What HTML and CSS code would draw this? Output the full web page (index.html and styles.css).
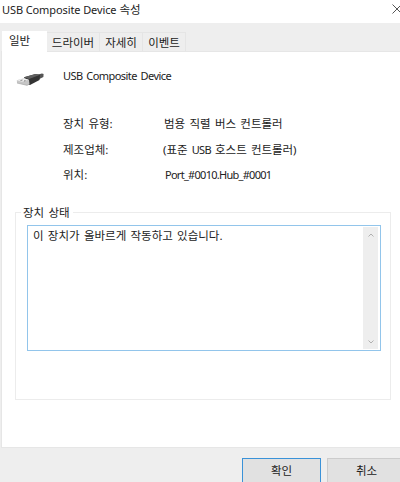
FILE: index.html
```html
<!DOCTYPE html>
<html lang="ko">
<head>
<meta charset="utf-8">
<title>USB Composite Device 속성</title>
<link rel="stylesheet" href="styles.css">
</head>
<body>
<div class="dialog">
  <header class="titlebar">
    <h1 class="title"><span class="title-name">USB Composite Device</span> 속성</h1>
    <svg class="close" width="8" height="10" viewBox="0 0 8 10"><path d="M.5.5l9 9M.5 9.500l9-9"/></svg>
  </header>
  <nav class="tabs">
    <span class="tab active">일반</span>
    <span class="tab driver">드라이버</span>
    <span class="tab details">자세히</span>
    <span class="tab events">이벤트</span>
  </nav>
  <main class="panel">
    <div class="device">
      <svg class="usb" width="28" height="14" viewBox="0 0 28 14">
        <path d="M20 2l6-1.600 1.600.5-.2 3.200-6 3z" fill="#555"/>
        <path d="M8 4.300L19.500 1l4.500 1-.5 5L14 12l-4-1z" fill="#333"/>
        <path d="M8 4.300L19.500 1l4 1-10.500 4z" fill="#606060"/>
        <path d="M.8 7.300L8 5.200l5 1.500.5 4.500-2.500 1.300L1 10z" fill="#c6c6c6"/>
        <path d="M.8 7.300L8 5.200l4.500 1.500-6.500 2z" fill="#ededed"/>
        <path d="M1 10l10 2.300 2-1" fill="none" stroke="#aaa" stroke-width=".7"/>
        <path d="M4.500 7.500l2-.5M8 8l1.500-.4" stroke="#888" stroke-width="1"/>
      </svg>
      <span class="device-name">USB Composite Device</span>
    </div>
    <dl class="props">
      <dt>장치 유형:</dt><dd class="type">범용 직렬 버스 컨트롤러</dd>
      <dt>제조업체:</dt><dd class="maker">(표준 <span class="latin">USB</span> 호스트 컨트롤러)</dd>
      <dt>위치:</dt><dd class="port">Port_#0010.Hub_#0001</dd>
    </dl>
    <section class="group">
      <h2 class="legend">장치 상태</h2>
      <div class="status">
        <p class="message">이 장치가 올바르게 작동하고 있습니다.</p>
        <div class="scrollbar">
          <svg width="6" height="4" viewBox="0 0 6 4"><path d="M.5 3.500L3 1l2.500 2.500"/></svg>
          <svg width="6" height="4" viewBox="0 0 6 4"><path d="M.5.5L3 3 5.500.5"/></svg>
        </div>
      </div>
    </section>
  </main>
  <footer class="actions">
    <button class="button primary">확인</button>
    <button class="button">취소</button>
  </footer>
</div>
</body>
</html>
```
FILE: styles.css
```css
* { box-sizing: border-box; }
body {
  margin: 0;
  overflow: hidden;
  font: 11.5px/16px "Noto Sans", "Noto Sans CJK KR", sans-serif;
  word-spacing: 1.3px;
  color: #222;
}
h1, h2, p, dl, dd { margin: 0; font-size: 11.5px; font-weight: 400; }
.dialog {
  width: 400px;
  height: 482px;
  display: flex;
  flex-direction: column;
  background: #eee;
  overflow: hidden;
}
.titlebar {
  height: 23px;
  flex: none;
  display: flex;
  justify-content: space-between;
  background: #fff;
  padding: 2px 0 0 2px;
}
.title { white-space: nowrap; word-spacing: 0; }
.title-name { font-size: 11px; letter-spacing: -.1px; }
.close { margin-top: 2px; fill: none; stroke: #555; stroke-width: 1; }
.tabs {
  position: relative;
  height: 28px;
  flex: none;
  display: flex;
  align-items: flex-end;
  padding-left: 2px;
}
.tab {
  height: 19px;
  border: 1px solid #e5e5e5;
  border-width: 1px 1px 0 0;
  text-align: center;
  line-height: 19px;
  white-space: nowrap;
}
.tab.active {
  width: 45px;
  height: 21px;
  margin-bottom: -1px;
  padding-left: 7px;
  background: #fff;
  border: 0;
  text-align: left;
  line-height: 19px;
}
.driver { width: 53px; }
.details { width: 43px; }
.events { width: 43px; }
.panel {
  height: 397px;
  flex: none;
  margin-left: 1px;
  background: #fff;
  border: 1px solid #e6e6e6;
  border-right: 0;
  padding: 0 9px 0 13px;
}
.device { display: flex; height: 58px; padding-top: 16px; }
.usb { margin: 5px 0 0 1px; flex: none; }
.device-name {
  margin-left: 19px;
  font-size: 11px;
  letter-spacing: -.54px;
}
.props {
  display: grid;
  grid-template-columns: 101px 1fr;
  grid-auto-rows: 25.500px;
  margin-left: 48px;
  padding-top: 6px;
  height: 94px;
  white-space: nowrap;
}
.maker { margin-left: -1px; letter-spacing: -.05px; }
.latin { font-size: 11px; letter-spacing: -.7px; }
.port { padding-left: 1px; font-size: 11px; letter-spacing: -.72px; }
.group {
  position: relative;
  height: 196px;
  display: grid;
  grid-template-rows: 9px 178px;
}
.group::before {
  content: "";
  position: absolute;
  inset: 8px 0 0 0;
  border: 1px solid #ececec;
  pointer-events: none;
}
.legend {
  z-index: 1;
  justify-self: start;
  height: 16px;
  margin-left: 6px;
  padding: 0 3px 0 2px;
  background: #fff;
  line-height: 17px;
}
.status {
  height: 126px;
  margin: 12px 10px 0 12px;
  display: flex;
  justify-content: space-between;
  border: 1px solid #92c5eb;
  padding: 1px;
}
.message { padding: 1px 0 0 4px; white-space: nowrap; }
.scrollbar {
  width: 15px;
  margin-right: 1px;
  display: flex;
  flex-direction: column;
  justify-content: space-between;
  align-items: center;
  background: #eee;
  padding: 6px 0 5px;
}
.scrollbar svg { fill: none; stroke: #b0b0b0; }
.actions {
  display: flex;
  gap: 6px;
  padding: 10px 0 0 242px;
}
.button {
  flex: none;
  width: 79px;
  height: 25px;
  padding: 0;
  border: 1px solid #ccc;
  background: #e1e1e1;
  color: #222;
  font: inherit;
  line-height: 22px;
}
.primary { border-color: #3a92d8; }
```
